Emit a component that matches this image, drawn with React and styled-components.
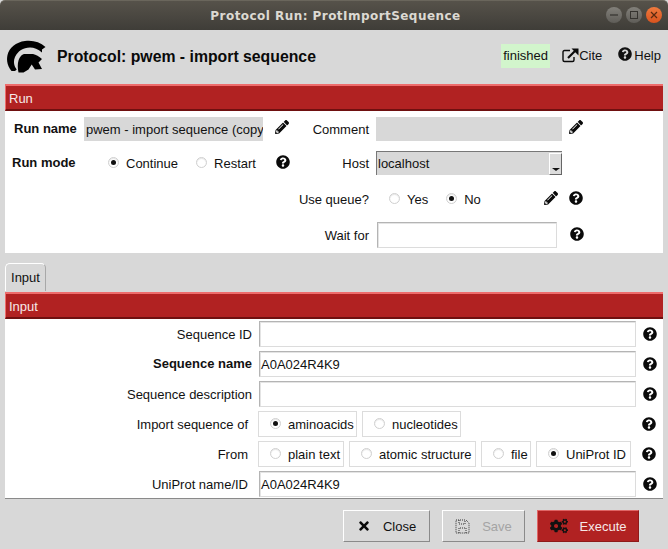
import styled, { createGlobalStyle } from 'styled-components'
import { FaPencilAlt, FaQuestionCircle, FaTimes, FaCogs } from 'react-icons/fa'

const GlobalStyle = createGlobalStyle`
    html, body {
        margin: 0;
        padding: 0;
        background: #d8d8d8;
    }
    * {
        box-sizing: border-box;
    }
`

const Window = styled.div`
    width: 668px;
    height: 549px;
    overflow: hidden;
    display: flex;
    flex-direction: column;
    background: #d8d8d8;
    color: #111;
    font-family: "Liberation Sans", Arial, sans-serif;
    font-size: 13px;
    white-space: nowrap;
`

const TitleBar = styled.div`
    height: 30px;
    flex: none;
    display: flex;
    align-items: center;
    justify-content: center;
    position: relative;
    padding-left: 3px;
    background: linear-gradient(#56524a, #3f3d38);
    border-top: 1px solid #6a665c;
    border-radius: 5px 5px 0 0;
    color: #dcd9d2;
    font-family: "DejaVu Sans", sans-serif;
    font-size: 12px;
    font-weight: bold;
    letter-spacing: 0.45px;
`

const WindowControls = styled.div`
    position: absolute;
    top: 6px;
    right: 6px;
    display: flex;
    gap: 4px;
`

const WindowControl = styled.div`
    width: 16px;
    height: 16px;
    border-radius: 50%;
    display: flex;
    align-items: center;
    justify-content: center;
    background: ${p => (p.$close ? 'linear-gradient(#ee7a3e, #d9531e)' : 'linear-gradient(#82807a, #5f5d58)')};
    color: ${p => (p.$close ? '#5a2a10' : '#35332f')};

    svg {
        display: block;
    }
`

const Header = styled.div`
    height: 54px;
    flex: none;
    display: flex;
    align-items: center;
    padding: 0 7px;
`

const Title = styled.div`
    margin-left: 10px;
    font-size: 15.8px;
    font-weight: bold;
    flex: 1;
    color: #0a0a0a;
    padding-bottom: 1px;
`

const Status = styled.div`
    height: 24px;
    width: 49px;
    display: flex;
    align-items: center;
    justify-content: center;
    background: #d2f5cc;
    margin-bottom: 3px;
`

const HeaderLink = styled.div`
    display: flex;
    align-items: center;
    margin-left: ${p => p.$gap}px;
    height: 24px;
    margin-bottom: 3px;

    svg {
        display: block;
        margin-right: ${p => (p.$iconUp ? 2 : 0)}px;
        margin-top: ${p => (p.$iconUp ? -4 : 0)}px;
    }
`

const Panel = styled.div`
    margin: 0 5px;
    flex: none;
    background: #fff;
`

const SectionBar = styled.div`
    height: 27px;
    display: flex;
    align-items: center;
    padding: 2px 0 0 3px;
    background: #b12222;
    border-top: 2px solid #ee6c6c;
    border-left: 1px solid #ee6c6c;
    border-bottom: 2px solid #6f1010;
    color: #f6e8e8;
`

const RunBody = styled.div`
    height: 142px;
    display: flex;
`

const LeftColumn = styled.div`
    width: 290px;
    flex: none;
    padding-top: 6px;
`

const RightColumn = styled.div`
    flex: 1;
    padding-top: 6px;
`

const LeftRow = styled.div`
    height: 24px;
    display: flex;
    align-items: center;
    margin-bottom: 10px;
`

const BoldLabel = styled.div`
    font-weight: bold;
    width: ${p => p.$width}px;
    padding-left: ${p => p.$indent}px;
    flex: none;
    margin-top: -2px;
`

const ReadOnlyField = styled.div`
    width: ${p => p.$width}px;
    height: 24px;
    flex: none;
    background: #d8d8d8;
    padding: 1px 2px 0;
    line-height: 24px;
    overflow: hidden;
`

const RightRow = styled.div`
    display: flex;
    align-items: center;
    height: ${p => p.$height}px;
    margin-bottom: ${p => p.$after}px;
`

const RightLabel = styled.div`
    width: 74px;
    flex: none;
    text-align: right;
    margin-right: 7px;
`

const Select = styled.div`
    width: 186px;
    height: 24px;
    flex: none;
    display: flex;
    align-items: center;
    justify-content: space-between;
    background: #d8d8d8;
    border-left: 1px solid #777;
    border-top: 1px solid #777;
    padding-left: 1px;
`

const SelectArrow = styled.div`
    width: 13px;
    height: 22px;
    display: flex;
    align-items: flex-end;
    justify-content: center;
    padding-bottom: 3px;
    background: #dcdcdc;
    border: 1px solid #fff;
    border-right-color: #666;
    border-bottom-color: #666;

    &::after {
        content: "";
        border-left: 4px solid transparent;
        border-right: 4px solid transparent;
        border-top: 3px solid #111;
    }
`

const TextField = styled.div`
    width: ${p => p.$width}px;
    height: 26px;
    flex: none;
    margin-left: ${p => p.$left || 0}px;
    background: #fff;
    border: 1px solid #b4b4b4;
    border-right-color: #dcdcdc;
    border-bottom-color: #dcdcdc;
    box-shadow: inset 1px 1px 0 #e4e4e4;
    padding: 1px 1px 0;
    display: flex;
    align-items: center;
`

const Radio = styled.span`
    width: 11px;
    height: 11px;
    flex: none;
    border-radius: 50%;
    display: inline-flex;
    align-items: center;
    justify-content: center;
    background: #fff;
    border: 1px solid #d0d0d0;
    box-shadow: inset 0 1px 1px #e6e6e6;
    margin-top: -2px;

    &::after {
        content: "";
        display: ${p => (p.$on ? 'block' : 'none')};
        width: 5px;
        height: 5px;
        border-radius: 50%;
        background: #111;
    }
`

const RadioOption = styled.div`
    display: flex;
    align-items: center;
    gap: 7px;
    margin-left: ${p => p.$left || 0}px;
`

const IconSlot = styled.div`
    flex: none;
    display: flex;
    margin-left: ${p => p.$left}px;
    margin-top: ${p => p.$top || 0}px;
    color: #0a0a0a;
`

const TabStrip = styled.div`
    height: 39px;
    flex: none;
    padding: 10px 5px 0;
    display: flex;
    align-items: flex-end;
`

const Tab = styled.div`
    width: 41px;
    height: 28px;
    margin-bottom: 1px;
    display: flex;
    align-items: center;
    justify-content: center;
    background: #d8d8d8;
    border: 1px solid #a8a8a8;
    border-top-color: #fff;
    border-left-color: #fff;
    border-bottom: none;
    border-radius: 5px 5px 0 0;
`

const InputBody = styled.div`
    height: 180px;
    border-bottom: 1px solid #8a8a8a;
`

const InputRow = styled.div`
    height: 30px;
    display: flex;
    align-items: center;
`

const InputLabel = styled.div`
    width: 247px;
    flex: none;
    text-align: right;
    padding-right: ${p => p.$inset || 0}px;
    margin-right: ${p => p.$gap || 7}px;
    font-weight: ${p => (p.$bold ? 'bold' : 'normal')};
    margin-top: ${p => (p.$up ? -2 : 0)}px;
`

const RadioGroup = styled.div`
    width: 378px;
    flex: none;
    display: flex;
    gap: 5px;
`

const RadioBox = styled.div`
    height: 26px;
    width: ${p => p.$width}px;
    flex: none;
    display: flex;
    align-items: center;
    padding-left: 11px;
    gap: 7px;
    border: 1px solid #dcdcdc;
`

const Footer = styled.div`
    flex: 1;
    display: flex;
    justify-content: flex-end;
    padding: 11px 29px 0 0;
    gap: 12px;
`

const FooterButton = styled.div`
    width: ${p => p.$width}px;
    height: 32px;
    display: flex;
    align-items: center;
    justify-content: center;
    gap: 12px;
    background: ${p => (p.$primary ? '#b12222' : '#d8d8d8')};
    color: ${p => (p.$primary ? '#f6e8e8' : p.$disabled ? '#a4a4a4' : '#111')};
    border: 1px solid ${p => (p.$primary ? '#8f1a1a' : '#8a8a8a')};
    border-top-color: ${p => (p.$primary ? '#e06666' : '#fff')};
    border-left-color: ${p => (p.$primary ? '#e06666' : '#fff')};

    svg {
        display: block;
        flex: none;
    }
`

const Help = () => <FaQuestionCircle size={14} />

const Pencil = () => <FaPencilAlt size={14} />

const SpartanLogo = () => (
    <svg width="40" height="34" viewBox="0 0 40 34">
        <path
            d="M4.5 31 L3 29 C0 24 -0.5 20 0.5 15 C2 8 9 2 18 1 C26 0 33 2 38.5 7 L35 9.5 L35 12.5 C31 9 27 7.5 23 7.5 C16 7.5 11 11 8 17 C6 22 7 26 9.7 29.5 L8 31 Z"
            fill="#000"
        />
        <path
            d="M11.5 32.5 C10.5 28 10.5 24 11.5 20.5 C13 16.5 15 14 18 14 L26 14 C29 14.5 32 16.5 35 19 L31.5 22.5 L35 29 L28 29.5 L24.7 24.5 L21.5 29.5 L16.5 32.5 Z"
            fill="#000"
        />
    </svg>
)

const CiteIcon = () => (
    <svg width="17" height="15" viewBox="0 0 17 15" fill="none" stroke="#0a0a0a">
        <path d="M8 2.5H2.5Q1 2.5 1 4V12Q1 13.5 2.5 13.5H10.5Q12 13.5 12 12V9" strokeWidth="1.4" />
        <path d="M6 10L13 3" strokeWidth="2.2" />
        <path d="M9.5 0.5H16.5V7.5Z" fill="#0a0a0a" stroke="none" />
    </svg>
)

const SaveIcon = () => (
    <svg width="15" height="15" viewBox="0 0 15 15" fill="none" stroke="#333" strokeWidth="1" strokeDasharray="1 1">
        <path d="M1 1H11L14 4V14H1Z" />
        <path d="M4 1V5H10V1M4 14V9H11V14" />
    </svg>
)

function App() {
    return (
        <Window>
            <GlobalStyle />
            <TitleBar>
                Protocol Run: ProtImportSequence
                <WindowControls>
                    <WindowControl>
                        <svg width="8" height="8" viewBox="0 0 8 8"><path d="M0 4H8" stroke="currentColor" strokeWidth="1.2" /></svg>
                    </WindowControl>
                    <WindowControl>
                        <svg width="8" height="8" viewBox="0 0 8 8"><rect x="0.5" y="0.5" width="7" height="7" fill="none" stroke="currentColor" /></svg>
                    </WindowControl>
                    <WindowControl $close>
                        <svg width="8" height="8" viewBox="0 0 8 8"><path d="M1 1L7 7M7 1L1 7" stroke="currentColor" strokeWidth="1.2" /></svg>
                    </WindowControl>
                </WindowControls>
            </TitleBar>

            <Header>
                <SpartanLogo />
                <Title>Protocol: pwem - import sequence</Title>
                <Status>finished</Status>
                <HeaderLink $gap={12}><CiteIcon />Cite</HeaderLink>
                <HeaderLink $gap={16} $iconUp><FaQuestionCircle size={14} />Help</HeaderLink>
            </Header>

            <Panel>
                <SectionBar>Run</SectionBar>
                <RunBody>
                    <LeftColumn>
                        <LeftRow>
                            <BoldLabel $width={79} $indent={9}>Run name</BoldLabel>
                            <ReadOnlyField $width={179}>pwem - import sequence (copy)</ReadOnlyField>
                            <IconSlot $left={12} $top={-4}><Pencil /></IconSlot>
                        </LeftRow>
                        <LeftRow>
                            <BoldLabel $width={103} $indent={7}>Run mode</BoldLabel>
                            <RadioOption><Radio $on />Continue</RadioOption>
                            <RadioOption $left={18}><Radio />Restart</RadioOption>
                            <IconSlot $left={20} $top={-2}><Help /></IconSlot>
                        </LeftRow>
                    </LeftColumn>
                    <RightColumn>
                        <RightRow $height={24} $after={10}>
                            <RightLabel>Comment</RightLabel>
                            <ReadOnlyField $width={186} />
                            <IconSlot $left={7} $top={-4}><Pencil /></IconSlot>
                        </RightRow>
                        <RightRow $height={24} $after={12}>
                            <RightLabel>Host</RightLabel>
                            <Select>
                                localhost
                                <SelectArrow />
                            </Select>
                        </RightRow>
                        <RightRow $height={24} $after={11}>
                            <RightLabel>Use queue?</RightLabel>
                            <RadioOption $left={13}><Radio />Yes</RadioOption>
                            <RadioOption $left={18}><Radio $on />No</RadioOption>
                            <IconSlot $left={63} $top={-2}><Pencil /></IconSlot>
                            <IconSlot $left={11} $top={-2}><Help /></IconSlot>
                        </RightRow>
                        <RightRow $height={26} $after={0}>
                            <RightLabel>Wait for</RightLabel>
                            <TextField $width={180} $left={1} />
                            <IconSlot $left={13} $top={-2}><Help /></IconSlot>
                        </RightRow>
                    </RightColumn>
                </RunBody>
            </Panel>

            <TabStrip>
                <Tab>Input</Tab>
            </TabStrip>

            <Panel>
                <SectionBar>Input</SectionBar>
                <InputBody>
                    <InputRow>
                        <InputLabel>Sequence ID</InputLabel>
                        <TextField $width={377} />
                        <IconSlot $left={7}><Help /></IconSlot>
                    </InputRow>
                    <InputRow>
                        <InputLabel $bold $up>Sequence name</InputLabel>
                        <TextField $width={377}>A0A024R4K9</TextField>
                        <IconSlot $left={7}><Help /></IconSlot>
                    </InputRow>
                    <InputRow>
                        <InputLabel>Sequence description</InputLabel>
                        <TextField $width={377} />
                        <IconSlot $left={7}><Help /></IconSlot>
                    </InputRow>
                    <InputRow>
                        <InputLabel $inset={4} $gap={6}>Import sequence of</InputLabel>
                        <RadioGroup>
                            <RadioBox $width={99}><Radio $on />aminoacids</RadioBox>
                            <RadioBox $width={99}><Radio />nucleotides</RadioBox>
                        </RadioGroup>
                        <IconSlot $left={6}><Help /></IconSlot>
                    </InputRow>
                    <InputRow>
                        <InputLabel $inset={4} $gap={6}>From</InputLabel>
                        <RadioGroup>
                            <RadioBox $width={86}><Radio />plain text</RadioBox>
                            <RadioBox $width={127}><Radio />atomic structure</RadioBox>
                            <RadioBox $width={50}><Radio />file</RadioBox>
                            <RadioBox $width={95}><Radio $on />UniProt ID</RadioBox>
                        </RadioGroup>
                        <IconSlot $left={6}><Help /></IconSlot>
                    </InputRow>
                    <InputRow>
                        <InputLabel $inset={4}>UniProt name/ID</InputLabel>
                        <TextField $width={377}>A0A024R4K9</TextField>
                        <IconSlot $left={7}><Help /></IconSlot>
                    </InputRow>
                </InputBody>
            </Panel>

            <Footer>
                <FooterButton $width={87}><FaTimes size={14} color="#0a0a0a" />Close</FooterButton>
                <FooterButton $width={83} $disabled><SaveIcon />Save</FooterButton>
                <FooterButton $width={102} $primary><FaCogs size={18} color="#111" />Execute</FooterButton>
            </Footer>
        </Window>
    )
}

export default App
